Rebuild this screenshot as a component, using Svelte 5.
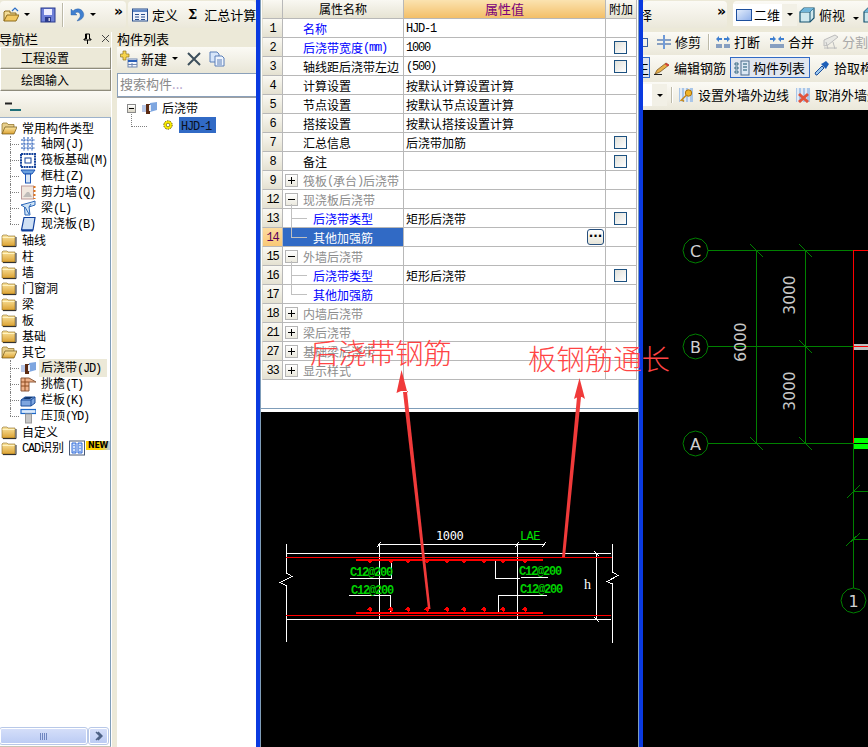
<script>
	const tree = [
		{ label: '常用构件类型', icon: 'open' },
		{ label: '轴网(J)', icon: 'grid', child: true },
		{ label: '筏板基础(M)', icon: 'raft', child: true },
		{ label: '框柱(Z)', icon: 'column', child: true },
		{ label: '剪力墙(Q)', icon: 'wall', child: true },
		{ label: '梁(L)', icon: 'beam', child: true },
		{ label: '现浇板(B)', icon: 'slab', child: true },
		{ label: '轴线', icon: 'folder' },
		{ label: '柱', icon: 'folder' },
		{ label: '墙', icon: 'folder' },
		{ label: '门窗洞', icon: 'folder' },
		{ label: '梁', icon: 'folder' },
		{ label: '板', icon: 'folder' },
		{ label: '基础', icon: 'folder' },
		{ label: '其它', icon: 'open' },
		{ label: '后浇带(JD)', icon: 'strip', child: true, active: true },
		{ label: '挑檐(T)', icon: 'eaves', child: true },
		{ label: '栏板(K)', icon: 'parapet', child: true },
		{ label: '压顶(YD)', icon: 'coping', child: true },
		{ label: '自定义', icon: 'folder' },
		{ label: 'CAD识别', icon: 'folder', isNew: true }
	];

	// kind: plain | blue | group | child
	const rows = [
		{ n: 1, name: '名称', kind: 'blue', value: 'HJD-1' },
		{ n: 2, name: '后浇带宽度(mm)', kind: 'blue', value: '1000', check: true },
		{ n: 3, name: '轴线距后浇带左边', value: '(500)', check: true },
		{ n: 4, name: '计算设置', value: '按默认计算设置计算' },
		{ n: 5, name: '节点设置', value: '按默认节点设置计算' },
		{ n: 6, name: '搭接设置', value: '按默认搭接设置计算' },
		{ n: 7, name: '汇总信息', value: '后浇带加筋', check: true },
		{ n: 8, name: '备注', check: true },
		{ n: 9, name: '筏板(承台)后浇带', kind: 'group' },
		{ n: 12, name: '现浇板后浇带', kind: 'group', open: true },
		{ n: 13, name: '后浇带类型', kind: 'child', value: '矩形后浇带', check: true },
		{ n: 14, name: '其他加强筋', kind: 'child', last: true, selected: true },
		{ n: 15, name: '外墙后浇带', kind: 'group', open: true },
		{ n: 16, name: '后浇带类型', kind: 'child', value: '矩形后浇带', check: true },
		{ n: 17, name: '其他加强筋', kind: 'child', last: true },
		{ n: 18, name: '内墙后浇带', kind: 'group' },
		{ n: 21, name: '梁后浇带', kind: 'group' },
		{ n: 27, name: '基础梁后浇带', kind: 'group' },
		{ n: 33, name: '显示样式', kind: 'group' }
	];

	const rebarX = [370, 391, 408, 427, 447, 464, 484, 503, 525];

	const rebarLabels = [
		[350, 576],
		[351, 594],
		[519, 575],
		[520, 593]
	];

	const slashes = [
		[756.5, 250.5], [805.5, 250.5], [805.5, 346.5], [756.5, 443.5], [805.5, 443.5]
	];

	const axes = [
		{ t: 'C', x: 695.5, y: 250.5 },
		{ t: 'B', x: 695.5, y: 346.5 },
		{ t: 'A', x: 695.5, y: 443.5 },
		{ t: '1', x: 853.5, y: 600.5 }
	];

	function ngon(cx, cy, r, n = 12) {
		const pts = [];
		for (let i = 0; i < n; i++) {
			const a = (i * 2 * Math.PI) / n;
			pts.push((cx + r * Math.cos(a)).toFixed(1) + ',' + (cy + r * Math.sin(a)).toFixed(1));
		}
		return pts.join(' ');
	}

	// ascii runs get the narrow latin face, the rest stays CJK
	const runs = (s) => String(s).match(/[\x00-\x7f]+|[^\x00-\x7f]+/g) ?? [];
</script>

{#snippet txt(s)}
	{#each runs(s) as r}{#if r.charCodeAt(0) < 128}<span class="lat">{r}</span>{:else}{r}{/if}{/each}
{/snippet}

{#snippet icon(name)}
	<svg class="ico" viewBox="0 0 16 16" width="16" height="16">
		{#if name === 'folder'}
			<path d="M1 4 L2 3 H6 L7 4 H14 V14 H1Z" fill="url(#fold)" stroke="#8a6a1e" stroke-width=".6"/>
			<path d="M15 5 V14.6 H2" stroke="#222" fill="none"/>
			<path d="M1.5 5.5 H13.5" stroke="#fff3c0"/>
		{:else if name === 'open'}
			<path d="M1 14 V4 L2 3 H6 L7 4.5 H13 V7" fill="#e7cf8d" stroke="#8a6a1e" stroke-width=".7"/>
			<path d="M1 14 L4 7 H16 L13 14Z" fill="url(#fold)" stroke="#6b5013" stroke-width=".7"/>
		{:else if name === 'grid'}
			<path d="M1 4 H15 M1 8 H15 M1 12 H15 M4 1 V15 M8 1 V15 M12 1 V15" stroke="#1d54b4" stroke-dasharray="2 .7"/>
		{:else if name === 'raft'}
			<rect x="1" y="2" width="14" height="13" fill="#fff" stroke="#17449c" stroke-width="2" stroke-dasharray="2 .6"/>
			<rect x="5" y="6" width="6" height="5" fill="none" stroke="#17449c"/>
		{:else if name === 'column'}
			<path d="M1 2 H15 L12 6 H4Z" fill="#6aa0de" stroke="#1d54b4"/>
			<rect x="5.5" y="6" width="5" height="9" fill="#d8e6f6" stroke="#1d54b4"/>
		{:else if name === 'wall'}
			<rect x="1.5" y="2" width="12" height="13" fill="#f1e7de" stroke="#b99"/>
			<path d="M3 13 H12 L9 8 H7Z" fill="#aaa" opacity=".7"/>
			<path d="M14.5 2 V15" stroke="#e0761d" stroke-width="2" stroke-dasharray="2 2"/>
		{:else if name === 'beam'}
			<path d="M1 5 L12 2 L15 1 V5 L9 7 L10 15 H5 L4.5 7Z" fill="#cfe4f6" stroke="#2a66b8"/>
			<path d="M5 7 L9 14 M9 7 L11 4" stroke="#2a66b8"/>
		{:else if name === 'slab'}
			<path d="M4 1.5 H15 L13 14 H1.5Z" fill="#cfe0f4" stroke="#0f3f9c" stroke-width="1.2"/>
			<path d="M1.5 14.5 H13" stroke="#0f3f9c" stroke-width="2"/>
		{:else if name === 'strip'}
			<path d="M1 5 H8 V12 H1Z" fill="#b8c8e8"/>
			<path d="M9 3 L16 2 V10 L9 12Z" fill="#7ea6e0"/>
			<path d="M5 4 H9 V14 H5Z" fill="#5c2c14"/>
			<path d="M8 5 H10 V11 H8Z" fill="#e8eefa"/>
		{:else if name === 'eaves'}
			<path d="M1 2 H9 L16 6 H9 V15 H1Z" fill="#efb28a" stroke="#8c5a3c"/>
			<path d="M1 6 H9 M1 10 H9 M5 2 V15" stroke="#8c4a20"/>
		{:else if name === 'parapet'}
			<path d="M1 8 L5 5 H15 L15 11 L11 14 H1Z" fill="#7ea6e0" stroke="#1d4f9c"/>
			<path d="M1 8 H11 V14 M11 8 L15 5" stroke="#1d4f9c" fill="none"/>
			<path d="M3 7 L6 5 H13 L10 7Z" fill="#14386e"/>
		{:else if name === 'coping'}
			<rect x="1" y="1.5" width="15" height="4" fill="#d9e8fa" stroke="#1d68c8" stroke-width="1.2"/>
			<rect x="5.5" y="6" width="6" height="9" fill="#c6c6c6" stroke="#999"/>
		{:else if name === 'new-list'}
			<rect x=".5" y="1" width="15" height="14" fill="#fff" stroke="#4a5a78"/>
			<path d="M3 3 H7 V13 H3Z M9 3 H13 V13 H9Z" fill="#cfe0fa" stroke="#2a66d8"/>
			<path d="M5 5 V6 M5 8 V9 M5 11 V12 M11 5 V6 M11 8 V9 M11 11 V12" stroke="#2a66d8"/>
		{:else if name === 'open-file'}
			<path d="M1 14 V5 L2 4 H7 V6 H13 V8" fill="#f3dc96" stroke="#8c6a1c"/>
			<path d="M1 14 L4 8 H16 L13 14Z" fill="#f3c963" stroke="#8c6a1c"/>
			<path d="M9 4 L12 1 L15 4" stroke="#2d6fc8" fill="none" stroke-width="1.2"/>
		{:else if name === 'save'}
			<rect x="1" y="1" width="14" height="14" fill="#6f80d8" stroke="#2a3a8c"/>
			<rect x="4" y="2" width="8" height="6" fill="#eef"/>
			<rect x="5" y="10" width="6" height="5" fill="#2a3a8c"/>
			<rect x="8.5" y="11" width="1.5" height="3" fill="#ccd"/>
		{:else if name === 'undo'}
			<path d="M2 2 V8 H8 L6 6 C9 4 12 6 11 10 L8 14 C14 13 16 8 14 5 C12 1 7 1 4 4Z" fill="#3f7fd0" stroke="#2a5a9c" stroke-width=".4"/>
		{:else if name === 'define'}
			<rect x=".5" y="2" width="15" height="12" fill="#eef3fb" stroke="#2a4f8c"/>
			<rect x="1" y="2.5" width="14" height="2.5" fill="#5f88c6"/>
			<path d="M3 7.5 H7 M3 10 H7 M3 12.5 H7 M9 7.5 H13 M9 10 H13 M9 12.5 H13" stroke="#2a4f8c"/>
		{:else if name === 'plane'}
			<rect x=".5" y="2.5" width="15" height="11" fill="url(#pale)" stroke="#1d4f9c"/>
		{:else if name === 'cube'}
			<path d="M1 5 L5 1 H15 V11 L11 15 H1Z" fill="#cfe8ee" stroke="#14506e" stroke-width="1.2"/>
			<path d="M1 5 H11 V15 M11 5 L15 1" stroke="#14506e" fill="none"/>
			<path d="M5 1 H15 L11 5 H1Z" fill="#6fb4d8"/>
		{:else if name === 'trim'}
			<path d="M1 6 H7 M1 10 H7 M9 6 H15 M9 10 H15" stroke="#1d4f9c"/>
			<path d="M8 1 V15" stroke="#6f9ad8" stroke-width="2"/>
		{:else if name === 'split'}
			<path d="M1 5 L4 2 V4 H7 V6 H4 V8Z M15 5 L12 2 V4 H9 V6 H12 V8Z" fill="#3f7fd0"/>
			<path d="M1 11 H7 M9 11 H15 M1 13 H7 M9 13 H15" stroke="#1d4f9c"/>
		{:else if name === 'merge'}
			<path d="M7 5 L4 2 V4 H1 V6 H4 V8Z M9 5 L12 2 V4 H15 V6 H12 V8Z" fill="#3f7fd0"/>
			<path d="M1 11 H15 M1 13 H15" stroke="#1d4f9c"/>
		{:else if name === 'cut'}
			<path d="M1 6 L12 1 L15 3 L5 11 L1 12Z M1 14 H14 M3 8 L5 15 M10 8 L12 15" stroke="#bcbcbc" fill="#e8e8e4"/>
		{:else if name === 'pencil'}
			<path d="M1 14 L3 10 L12 3 L15 5 L6 12Z" fill="#e8b048" stroke="#6b4a18" stroke-width=".7"/>
			<path d="M12 3 L15 5 L14 6.5 L11 4.5Z" fill="#d83a3a"/>
			<path d="M0 14.5 H8" stroke="#222"/>
		{:else if name === 'list'}
			<path d="M1 3 H4 V5 H1Z M1 7 H4 V9 H1Z M1 11 H4 V13 H1Z" fill="none" stroke="#14506e" stroke-width=".8"/>
			<rect x="7" y="1" width="8" height="14" fill="#dce8f4" stroke="#4a6a8c"/>
			<path d="M9 4 H13 M9 7 H13 M9 10 H13" stroke="#14506e"/>
		{:else if name === 'dropper'}
			<path d="M2 15 L1 13 L8 6 L10 8 L3 15Z" fill="#9cc8ee" stroke="#1d4f9c"/>
			<path d="M7 4 L12 9 L13 7 L15 4 L12 1 L9 3Z" fill="#1d5fb8"/>
		{:else if name === 'key'}
			<path d="M1 1 H15 V15 H1Z" fill="#a9c6e8"/>
			<path d="M3 1 V15 M7 1 V15 M11 1 V15" stroke="#f6f6f6" stroke-width="1.5"/>
			<circle cx="10.5" cy="6" r="3.2" fill="#f0b428" stroke="#a87010"/>
			<path d="M8.5 8 L2.5 14 M4 12.5 L6 14.5" stroke="#c88a18" stroke-width="1.6"/>
		{:else if name === 'cross'}
			<path d="M1 1 H15 V15 H1Z" fill="#a9c6e8"/>
			<path d="M3 1 V15 M7 1 V15 M11 1 V15" stroke="#f6f6f6" stroke-width="1.5"/>
			<path d="M4 7 L13 15 M13 7 L4 15" stroke="#e2553c" stroke-width="3"/>
		{/if}
	</svg>
{/snippet}

{#snippet caret()}
	<span class="caret"></span>
{/snippet}

<div class="app">
	<svg class="defs" width="0" height="0">
		<defs>
			<linearGradient id="fold" x1="0" y1="0" x2="0" y2="1">
				<stop offset="0" stop-color="#fbe6a2"/>
				<stop offset="1" stop-color="#dca232"/>
			</linearGradient>
			<linearGradient id="pale" x1="0" y1="0" x2="1" y2="1">
				<stop offset="0" stop-color="#e6effc"/>
				<stop offset="1" stop-color="#8fb0ea"/>
			</linearGradient>
		</defs>
	</svg>

	<div class="left">
		<div class="topbar">
			<div class="strip quick">
				{@render icon('open-file')}
				{@render caret()}
				<span class="ml6">{@render icon('save')}</span>
				<span class="sep ml6"></span>
				<span class="ml6">{@render icon('undo')}</span>
				{@render caret()}
				<span class="more ml14">»</span>
			</div>
			<div class="strip main">
				{@render icon('define')}
				<span class="tool-t ml4">定义</span>
				<span class="sigma">Σ</span>
				<span class="tool-t">汇总计算</span>
			</div>
		</div>
		<div class="panels">
			<div class="nav">
				<div class="pane-head">
					<span class="nav-title">导航栏</span>
					<svg class="pin" viewBox="0 0 9 11" width="9" height="11"><path d="M2.5 1 H6.5 V6 H8 V7 H1 V6 H2.5Z M3.5 1 V6 M4.5 7 V11" stroke="#000" fill="none"/></svg>
					<svg class="close" viewBox="0 0 9 9" width="9" height="9"><path d="M1 1 L8 8 M8 1 L1 8" stroke="#444"/></svg>
				</div>
				<button class="navbtn">工程设置</button>
				<button class="navbtn">绘图输入</button>
				<div class="navtools">
					<svg viewBox="0 0 16 10" width="16" height="10"><path d="M0 1.5 H7" stroke="#222" stroke-width="2"/><path d="M5 8 H16" stroke="#1f6f78" stroke-width="2"/></svg>
				</div>
				<div class="tree">
					{#each tree as row, i}
						<div class="node" class:child={row.child} class:last={row.child && !tree[i + 1]?.child}>
							{@render icon(row.icon)}
							<span class="node-label" class:active={row.active}>{@render txt(row.label)}</span>
							{#if row.isNew}
								<span class="new-ico">{@render icon('new-list')}</span>
								<span class="new">NEW</span>
							{/if}
						</div>
					{/each}
				</div>
				<div class="scroll">
					<div class="thumb"><span class="grip"></span></div>
					<div class="arrow-btn">
						<svg viewBox="0 0 8 10" width="8" height="10"><path d="M1 1 L5 5 L1 9 M3 1 L7 5 L3 9" fill="none" stroke="#4d6185" stroke-width="1.5"/></svg>
					</div>
				</div>
			</div>
			<div class="gutter"></div>
			<div class="list">
				<div class="pane-head"><span>构件列表</span></div>
				<div class="listtools">
					<svg class="ico" viewBox="0 0 18 18" width="18" height="18">
						<path d="M3 1 H6 V4 H9 V7 H6 V10 H3 V7 H0.5 V4 H3Z" fill="#f7d54e" stroke="#8c7420" stroke-width=".7"/>
						<rect x="8" y="9" width="9" height="8" fill="#f4f6fb" stroke="#6f86b0"/>
						<path d="M8 11 H17" stroke="#2a5fb8" stroke-width="2"/>
						<path d="M12 13 V17 M8 14.5 H17" stroke="#6f86b0"/>
					</svg>
					<span class="tool-t">新建</span>
					{@render caret()}
					<svg class="x" viewBox="0 0 14 14" width="14" height="14"><path d="M1 1 L13 13 M13 1 L1 13" stroke="#3d4f5c" stroke-width="2"/></svg>
					<svg class="ico copy" viewBox="0 0 16 16" width="16" height="16">
						<path d="M1 1 H8 L10 3 V11 H1Z" fill="#d7e6fa" stroke="#5a7fb8"/>
						<path d="M6 5 H13 L15 7 V15 H6Z" fill="#eef4fd" stroke="#5a7fb8"/>
						<path d="M8 9 H13 M8 11 H13 M8 13 H13" stroke="#5a7fb8"/>
					</svg>
				</div>
				<div class="search">搜索构件<span class="dots">...</span></div>
				<div class="comp-tree">
					<div class="comp-row">
						<span class="minus"></span>
						{@render icon('strip')}
						<span class="comp-name">后浇带</span>
					</div>
					<div class="comp-row sub">
						<svg class="gear" viewBox="0 0 12 12" width="12" height="12">
							<circle cx="6" cy="6" r="4.2" fill="#fff200" stroke="#6b5a00" stroke-dasharray="1.6 1"/>
							<circle cx="6" cy="6" r="1.8" fill="#fff" stroke="#6b5a00" stroke-width=".7"/>
						</svg>
						<span class="comp-sel">{@render txt('HJD-1')}</span>
					</div>
				</div>
			</div>
		</div>
	</div>

	<div class="bluebar"></div>

	<div class="dialog">
		<div class="table">
			<div class="cell head idx"></div>
			<div class="cell head center">属性名称</div>
			<div class="cell head hot center">属性值</div>
			<div class="cell head center">附加</div>
			{#each rows as row}
				<div class="cell idx" class:hot-idx={row.selected}>{@render txt(row.n)}</div>
				<div
					class="cell name {row.kind ?? ''}"
					class:open={row.open}
					class:last={row.last}
					class:selected={row.selected}
				>
					{#if row.kind === 'group'}
						<span class="expander" class:minus-sign={row.open}></span>
					{/if}
					{@render txt(row.name)}
				</div>
				<div class="cell value">
					{#if row.value}{@render txt(row.value)}{/if}
					{#if row.selected}<span class="ellipsis">···</span>{/if}
				</div>
				<div class="cell extra">
					{#if row.check}<span class="check"></span>{/if}
				</div>
			{/each}
		</div>
		<div class="spacer"></div>
		<div class="preview">
			<svg viewBox="261 412 377 335" width="377" height="335">
				<g stroke="#fff" fill="none">
					<path d="M286.5 544 V573 L292 576.5 L280 582.5 L286.5 586 V642"/>
					<path d="M612.5 544 V572 L618 575.5 L607 581.5 L612.5 584 V643"/>
					<path d="M286 553.5 H611 M286 619.5 H611"/>
					<path d="M379.5 543 V619.5 M517.5 543 V619.5"/>
					<path d="M379 544.5 H544 M377 547 L381 542 M515 547 L519 542 M542 547 L546 542"/>
					<path d="M596.5 553 V620 M594 551 L599 556 M594 617 L599 622"/>
					<path d="M391.5 562 V578.5 H350"/>
					<path d="M349 595.5 H390.5 V612"/>
					<path d="M497 560 L495.5 562 V578 H520 M521 577.5 H548"/>
					<path d="M547 595.5 H498.5 V612 L497 614"/>
				</g>
				<g stroke="#f00" fill="none">
					<path d="M286 557.5 H612 M286 615.5 H611"/>
					<path d="M356 559.5 H543 M356 612.5 H543" stroke-width="2"/>
				</g>
				{#each rebarX as x}
					<path d="M{x - 3} 560 H{x + 3} L{x} 564Z" fill="#f00"/>
					<path d="M{x} 606.5 L{x + 2.5} 609.5 L{x} 612 L{x - 2.5} 609.5Z" fill="#f00"/>
				{/each}
				{#each rebarLabels as [x, y]}
					<text class="rebar" {x} {y}>C12@200</text>
				{/each}
				<text class="dim" x="436" y="540">1000</text>
				<text class="lae" x="520" y="540">LAE</text>
				<text class="h" x="584" y="589">h</text>
			</svg>
		</div>
	</div>

	<div class="bluebar thin"></div>

	<div class="right">
		<div class="tb tb1">
			<div class="strip first"><span class="tool-t clip">择</span><span class="more pushed">»</span></div>
			<div class="strip second">
				<div class="whitebox">{@render icon('plane')}<span class="tool-t">二维</span><span class="boxcaret">{@render caret()}</span></div>
				{@render icon('cube')}
				<span class="tool-t">俯视</span>
				<span class="far">{@render caret()}</span>
				{@render icon('cube')}
			</div>
		</div>
		<div class="tb tb2">
			<span class="stub"></span>
			{@render icon('trim')}
			<span class="tool-t">修剪</span>
			<span class="sep short"></span>
			{@render icon('split')}
			<span class="tool-t">打断</span>
			<span class="ml6">{@render icon('merge')}</span>
			<span class="tool-t">合并</span>
			<span class="ml6">{@render icon('cut')}</span>
			<span class="tool-t grey">分割</span>
		</div>
		<div class="tb tb3">
			<span class="stubbox">王</span>
			{@render icon('pencil')}
			<span class="tool-t">编辑钢筋</span>
			<div class="pressed">{@render icon('list')}<span class="tool-t">构件列表</span></div>
			{@render icon('dropper')}
			<span class="tool-t">拾取构件</span>
		</div>
		<div class="tb tb4">
			<div class="whitestub"><span class="boxcaret">{@render caret()}</span></div>
			<span class="sep short"></span>
			{@render icon('key')}
			<span class="tool-t">设置外墙外边线</span>
			<span class="ml2">{@render icon('cross')}</span>
			<span class="tool-t">取消外墙外边线</span>
		</div>
		<div class="canvas">
			<svg viewBox="643 110 225 637" width="225" height="637">
				<g stroke="#008000" fill="none">
					<path d="M708 250.5 H853 M708 346.5 H853 M708 443.5 H853"/>
					<path d="M756.5 250 V443 M805.5 250 V443 M853.5 443 V588"/>
					{#each slashes as [x, y]}
						<path d="M{x - 6.5} {y - 6.5} L{x + 7} {y + 7}"/>
					{/each}
					<path d="M847 498 L860 485 M853 491.5 H868 M846 546 L860 533 M853 539.5 H868"/>
					{#each axes as a}
						<polygon points={ngon(a.x, a.y, 12.5)}/>
					{/each}
				</g>
				<path d="M854 250.5 H868 M853.5 250 V443" stroke="#f00" fill="none"/>
				<rect x="854" y="344" width="14" height="6" fill="#c0c0c0"/>
				<path d="M854 346.5 H868" stroke="#f00"/>
				<rect x="854" y="438" width="14" height="5" fill="#00ff00"/>
				<rect x="854" y="444" width="14" height="5" fill="#00ff00"/>
				{#each axes as a}
					<text class="axis" x={a.x} y={a.y + 6}>{a.t}</text>
				{/each}
				<text class="axis-dim" transform="translate(746 342) rotate(-90)">6000</text>
				<text class="axis-dim" transform="translate(794.5 295) rotate(-90)">3000</text>
				<text class="axis-dim" transform="translate(794.5 391) rotate(-90)">3000</text>
			</svg>
		</div>
	</div>

	<!-- hand drawn notes over the dialog -->
	<svg class="marks" viewBox="0 0 868 747" width="868" height="747">
		<g fill="#f03a3a">
			<polygon points="428,609 430.5,609 407,392 403,392"/>
			<polygon points="401.5,370 396.5,393 401,391 408,391 407.5,393"/>
			<polygon points="562,557 565,557 581,397 577,397"/>
			<polygon points="579.5,378 574,399 578,397 582,397 585,399"/>
		</g>
	</svg>
	<span class="note note-a">后浇带钢筋</span>
	<span class="note note-b">板钢筋通长</span>
</div>

<style>
	:global(body) {
		margin: 0;
		background: #000;
	}

	.app {
		position: relative;
		display: flex;
		width: 868px;
		height: 747px;
		overflow: hidden;
		font: 12px/16px "Noto Sans CJK SC", sans-serif;
		color: #000;
		background: #ece9d8;
	}

	.defs {
		position: absolute;
	}

	.lat {
		font-family: "Liberation Mono", monospace;
		letter-spacing: -1.2px;
	}

	.ico {
		flex-shrink: 0;
		display: block;
	}

	.tool-t {
		font-size: 13px;
		white-space: nowrap;
		flex-shrink: 0;
	}

	.grey {
		color: #a8a8a8;
	}

	.ml2 { margin-left: 2px; }
	.ml4 { margin-left: 4px; }
	.ml6 { margin-left: 6px; }
	.ml14 { margin-left: 14px; }

	.caret {
		display: inline-block;
		flex-shrink: 0;
		width: 0;
		height: 0;
		margin: 0 4px 0 5px;
		border: 3px solid transparent;
		border-top: 3px solid #000;
		border-bottom: 0;
	}

	.sep {
		display: block;
		flex-shrink: 0;
		width: 1px;
		height: 24px;
		background: #bcb9a8;
		box-shadow: 1px 0 #fff;
	}

	.sep.short {
		height: 16px;
	}

	.more {
		font: bold 14px/14px "DejaVu Sans", sans-serif;
		margin-top: -8px;
	}

	.strip {
		display: flex;
		align-items: center;
		height: 27px;
		border-radius: 4px;
		background: linear-gradient(#fbfaf5, #ebe8da);
	}

	/* left side */
	.left {
		width: 256px;
		flex-shrink: 0;
		display: flex;
		flex-direction: column;
	}

	.topbar {
		display: flex;
		align-items: flex-start;
		height: 32px;
		flex-shrink: 0;
		overflow: hidden;
		padding-top: 1px;
		box-sizing: border-box;
	}

	.quick {
		width: 126px;
		padding-left: 3px;
		box-sizing: border-box;
		flex-shrink: 0;
	}

	.main {
		margin-left: 2px;
		padding-left: 4px;
		flex: 1;
		white-space: nowrap;
	}

	.sigma {
		font: bold 13px "DejaVu Serif", serif;
		margin: 0 7px 0 10px;
	}

	.panels {
		display: flex;
		flex: 1;
		min-height: 0;
	}

	.pane-head {
		display: flex;
		align-items: flex-start;
		height: 15px;
		font-size: 13px;
		line-height: 13px;
		white-space: nowrap;
		flex-shrink: 0;
		background: #ece9d8;
	}

	.nav {
		width: 111px;
		flex-shrink: 0;
		display: flex;
		flex-direction: column;
		overflow: hidden;
	}

	.nav-title {
		margin-left: -1px;
	}

	.pin {
		margin: 1px 0 0 45px;
	}

	.close {
		margin: 2px 0 0 9px;
	}

	.navbtn {
		display: block;
		width: 111px;
		height: 22px;
		padding: 0 0 0 20px;
		margin: 0;
		text-align: left;
		font: inherit;
		background: #ece9d8;
		border: 1px solid;
		border-color: #fff #8f8c7c #8f8c7c #fff;
		box-shadow: inset 0 -1px #d0cdbc;
		box-sizing: border-box;
		flex-shrink: 0;
	}

	.navtools {
		height: 26px;
		flex-shrink: 0;
		display: flex;
		align-items: center;
		padding: 5px 0 0 5px;
		background: linear-gradient(#fbfaf5, #e9e6d7);
		box-sizing: border-box;
	}

	.tree {
		flex: 1;
		padding-top: 2px;
		background: #fff;
		border-top: 1px solid #9db2cb;
		border-right: 1px solid #7f9db9;
		white-space: nowrap;
		overflow: hidden;
	}

	.node {
		position: relative;
		display: flex;
		align-items: center;
		height: 16px;
		padding-left: 1px;
	}

	.node-label {
		margin-left: 5px;
	}

	.node.child {
		padding-left: 20px;
	}

	.node.child::before {
		content: "";
		position: absolute;
		left: 10px;
		top: 0;
		bottom: 0;
		border-left: 1px dotted #808080;
	}

	.node.child.last::before {
		bottom: 8px;
	}

	.node.child::after {
		content: "";
		position: absolute;
		left: 10px;
		width: 9px;
		top: 8px;
		border-top: 1px dotted #808080;
	}

	.node-label.active {
		background: #ece9d8;
		padding: 0 2px;
		margin-left: 3px;
		width: 64px;
	}

	.new-ico {
		margin-left: 5px;
	}

	.new {
		margin: -6px 0 0 1px;
		height: 9px;
		padding: 0 2px;
		font: bold 8px/9px "DejaVu Sans", sans-serif;
		letter-spacing: -0.3px;
		background: linear-gradient(90deg, #ffd400 60%, #b9cdf0);
	}

	.scroll {
		flex-shrink: 0;
		display: flex;
		gap: 2px;
		height: 23px;
		padding: 4px 2px 2px 0;
		box-sizing: border-box;
		background: #fff;
		border-right: 1px solid #7f9db9;
		border-bottom: 1px solid #c8c5b4;
	}

	.thumb {
		flex: 1;
		display: flex;
		align-items: center;
		justify-content: center;
		border: 1px solid #fff;
		border-radius: 2px;
		outline: 1px solid #b8c8e8;
		background: linear-gradient(#d4def9, #bcccf4);
	}

	.grip {
		width: 7px;
		height: 7px;
		background: repeating-linear-gradient(90deg, #6f86c0 0 1px, transparent 1px 2px);
	}

	.arrow-btn {
		width: 17px;
		display: flex;
		align-items: center;
		justify-content: center;
		border: 1px solid #fff;
		border-radius: 2px;
		outline: 1px solid #b8c8e8;
		background: linear-gradient(#d4def9, #bcccf4);
	}

	.gutter {
		width: 6px;
		flex-shrink: 0;
		background: #ece9d8;
		border-left: 1px solid #fff;
		box-sizing: border-box;
	}

	.list {
		flex: 1;
		min-width: 0;
		display: flex;
		flex-direction: column;
	}

	.listtools {
		display: flex;
		align-items: center;
		height: 26px;
		flex-shrink: 0;
		padding: 0 0 3px 3px;
		background: linear-gradient(#fbfaf5, #e9e6d7);
		box-sizing: border-box;
	}

	.listtools .tool-t {
		margin-left: 3px;
	}

	.x {
		margin-left: 5px;
	}

	.copy {
		margin-left: 8px;
	}

	.search {
		height: 24px;
		flex-shrink: 0;
		box-sizing: border-box;
		padding: 2px 0 0 2px;
		color: #8a8a8a;
		background: #fff;
		border: 1px solid #8aa0ba;
		border-right: 0;
		font-size: 13px;
		white-space: nowrap;
	}

	.dots {
		color: #b0a0c8;
	}

	.comp-tree {
		flex: 1;
		background: #fff;
		border-top: 1px solid #a0a0a0;
		padding-top: 2px;
	}

	.comp-row {
		display: flex;
		align-items: center;
		height: 16px;
		padding-left: 10px;
	}

	.minus {
		position: relative;
		width: 9px;
		height: 9px;
		box-sizing: border-box;
		margin-right: 5px;
		border: 1px solid #8a8a8a;
		background: linear-gradient(#fff, #d8d4c4);
	}

	.minus::before {
		content: "";
		position: absolute;
		left: 1px;
		right: 1px;
		top: 3px;
		height: 1px;
		background: #000;
	}

	.minus::after {
		content: "";
		position: absolute;
		left: 3px;
		top: 9px;
		height: 12px;
		width: 15px;
		border-left: 1px dotted #808080;
		border-bottom: 1px dotted #808080;
	}

	.comp-name {
		margin-left: 5px;
	}

	.comp-row.sub {
		padding-left: 45px;
		height: 17px;
	}

	.comp-sel {
		width: 37px;
		height: 16px;
		margin-left: 5px;
		padding-left: 2px;
		box-sizing: border-box;
		background: #316ac5;
		color: #0b1020;
	}

	.bluebar {
		width: 4px;
		flex-shrink: 0;
		background: #0a3ae0;
	}

	/* property dialog */
	.dialog {
		width: 379px;
		flex-shrink: 0;
		display: flex;
		flex-direction: column;
		box-sizing: border-box;
		background: #fff;
		border-left: 1px solid #7f9db9;
		border-right: 1px solid #7f9db9;
	}

	.table {
		display: grid;
		grid-template-columns: 21px 121px 202px 31px;
		grid-auto-rows: 19px;
		margin-left: 1px;
		width: 375px;
		flex-shrink: 0;
	}

	.cell {
		position: relative;
		display: flex;
		align-items: center;
		box-sizing: border-box;
		border-right: 1px solid #b8b8b8;
		border-bottom: 1px solid #b8b8b8;
		white-space: nowrap;
		line-height: 18px;
		padding-top: 2px;
	}

	.head {
		padding-top: 0;
		background: linear-gradient(#f9f8f2, #e6e3d3);
	}

	.center {
		justify-content: center;
	}

	.head.hot {
		color: #7a007a;
		font-size: 13px;
		background: linear-gradient(#fbe3b0, #f3bf68);
	}

	.idx {
		justify-content: center;
		background: linear-gradient(#faf9f3, #e4e1d1);
		border-left: 1px solid #e4e1d1;
	}

	.idx.hot-idx {
		color: #5a005a;
		background: linear-gradient(#fddc9f, #f9c876);
	}

	.name {
		padding-left: 20px;
	}

	.name.blue,
	.name.child {
		color: #0000ff;
	}

	.name.group {
		padding-left: 2px;
		color: #8c8c8c;
	}

	.name.child {
		padding-left: 30px;
	}

	.name.child::before {
		content: "";
		position: absolute;
		left: 8px;
		top: -1px;
		bottom: -1px;
		border-left: 1px solid #c0c0c0;
	}

	.name.child.last::before {
		bottom: 9px;
	}

	.name.child::after {
		content: "";
		position: absolute;
		left: 8px;
		width: 16px;
		top: 9px;
		border-top: 1px solid #c0c0c0;
	}

	.name.open::after {
		content: "";
		position: absolute;
		left: 8px;
		top: 14px;
		bottom: -1px;
		border-left: 1px solid #c0c0c0;
	}

	.name.selected {
		color: #fff;
		background: #316ac5;
	}

	.expander {
		position: relative;
		display: block;
		width: 13px;
		height: 13px;
		flex-shrink: 0;
		box-sizing: border-box;
		margin: -2px 5px 0 0;
		border: 1px solid #b5b5b5;
		background: linear-gradient(#fff, #ebe9de);
	}

	.expander::before {
		content: "";
		position: absolute;
		left: 2px;
		right: 2px;
		top: 5px;
		height: 1px;
		background: #000;
	}

	.expander::after {
		content: "";
		position: absolute;
		top: 2px;
		bottom: 2px;
		left: 5px;
		width: 1px;
		background: #000;
	}

	.expander.minus-sign::after {
		display: none;
	}

	.value {
		padding-left: 2px;
	}

	.ellipsis {
		position: absolute;
		right: 1px;
		top: 1px;
		width: 17px;
		height: 16px;
		box-sizing: border-box;
		border: 1px solid #274f7c;
		border-radius: 3px;
		background: linear-gradient(#fff, #e6e4d8);
		font: bold 12px/12px "DejaVu Sans", sans-serif;
		text-align: center;
	}

	.extra {
		justify-content: center;
		padding: 0 1px 0 0;
	}

	.check {
		display: block;
		width: 13px;
		height: 13px;
		box-sizing: border-box;
		border: 1px solid #1c5180;
		background: linear-gradient(135deg, #e0e0d9, #fff);
	}

	.spacer {
		flex: 1;
		border-bottom: 1px solid #7f9db9;
	}

	.preview {
		height: 335px;
		flex-shrink: 0;
		margin-top: 3px;
		background: #000;
	}

	.preview svg,
	.canvas svg {
		display: block;
	}

	.preview path,
	.canvas path {
		shape-rendering: crispEdges;
	}

	.rebar {
		font: bold 12px "Liberation Mono", monospace;
		letter-spacing: -1.2px;
		fill: #00d000;
	}

	.dim {
		font: 12px "DejaVu Sans Mono", monospace;
		letter-spacing: -0.4px;
		fill: #fff;
	}

	.lae {
		font: 12px "Liberation Mono", monospace;
		letter-spacing: -0.6px;
		fill: #00e000;
	}

	.h {
		font: 14px "Liberation Serif", serif;
		fill: #fff;
	}

	/* right side */
	.right {
		flex: 1;
		min-width: 0;
		display: flex;
		flex-direction: column;
	}

	.tb {
		display: flex;
		align-items: center;
		flex-shrink: 0;
		box-sizing: border-box;
		overflow: hidden;
		white-space: nowrap;
		background: linear-gradient(#fbfaf5, #ebe8da);
	}

	.tb1 {
		height: 32px;
		align-items: flex-start;
		padding-top: 1px;
		background: #ece9d8;
	}

	.first {
		width: 84px;
		flex-shrink: 0;
	}

	.clip {
		margin-left: -4px;
	}

	.pushed {
		margin-left: auto;
		margin-right: 1px;
	}

	.second {
		flex: 1;
		margin-left: 6px;
	}

	.whitebox {
		display: flex;
		align-items: center;
		height: 22px;
		flex-shrink: 0;
		width: 61px;
		padding-left: 3px;
		margin-right: 5px;
		background: #fff;
		box-sizing: border-box;
		gap: 2px;
	}

	.boxcaret {
		display: flex;
		align-items: center;
		height: 100%;
		margin-left: auto;
		background: #f2f0e6;
	}

	.second .tool-t {
		margin-left: 4px;
	}

	.whitebox .tool-t {
		margin-left: 0;
	}

	.far {
		margin-left: 3px;
	}

	.tb2 {
		height: 23px;
		gap: 3px;
		padding-bottom: 3px;
	}

	.stub {
		width: 5px;
		height: 9px;
		margin-right: 5px;
		box-sizing: border-box;
		border: 1px solid #3a5f9c;
		border-left: 0;
		flex-shrink: 0;
	}

	.tb2 .sep {
		margin: 0 3px 0 4px;
	}

	.tb3 {
		height: 27px;
		gap: 4px;
		padding-bottom: 2px;
	}

	.stubbox {
		width: 7px;
		height: 21px;
		flex-shrink: 0;
		overflow: hidden;
		direction: rtl;
		font-size: 13px;
		line-height: 21px;
		background: #e0e3ea;
		border: 1px solid #316ac5;
		border-left: 0;
		box-sizing: border-box;
	}

	.pressed {
		display: flex;
		align-items: center;
		gap: 3px;
		flex-shrink: 0;
		width: 80px;
		height: 21px;
		padding-left: 3px;
		box-sizing: border-box;
		background: #e1e6ef;
		border: 1px solid #316ac5;
	}

	.tb4 {
		height: 28px;
		gap: 4px;
		padding-bottom: 2px;
	}

	.whitestub {
		display: flex;
		justify-content: flex-end;
		width: 24px;
		height: 22px;
		background: #fff;
		flex-shrink: 0;
	}

	.tb4 .sep {
		margin: 0 2px 0 0;
	}

	.canvas {
		flex: 1;
		background: #000;
	}

	.axis {
		font: 16px "DejaVu Sans", sans-serif;
		fill: #d0d0d0;
		text-anchor: middle;
	}

	.axis-dim {
		font: 15.5px "DejaVu Sans", sans-serif;
		fill: #c8c8c8;
		text-anchor: middle;
	}

	.marks {
		position: absolute;
		left: 0;
		top: 0;
		pointer-events: none;
	}

	.note {
		position: absolute;
		font: 300 28.4px/34px "Noto Sans CJK SC", sans-serif;
		color: #ff4444;
		white-space: nowrap;
	}

	.note-a {
		left: 310px;
		top: 335px;
	}

	.note-b {
		left: 528px;
		top: 341px;
	}
</style>
